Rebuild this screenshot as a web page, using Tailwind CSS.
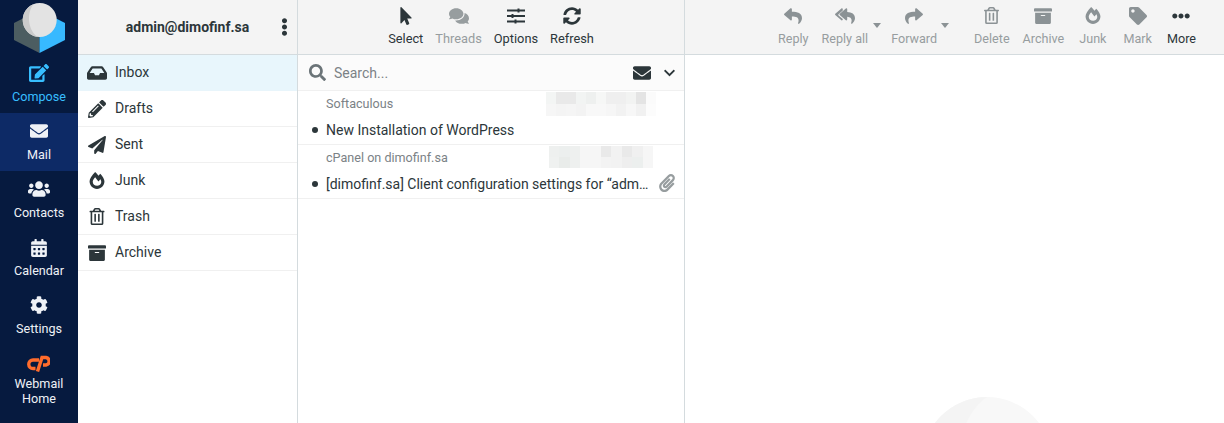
<!DOCTYPE html>
<html lang="en">
  <head>
    <meta charset="UTF-8" />
    <title>Roundcube Webmail</title>
    <script src="https://cdn.jsdelivr.net/npm/@tailwindcss/browser@4"></script>
  </head>
  <body class="h-[423px] w-[1224px] overflow-hidden bg-white font-['Roboto',sans-serif] text-[14px] text-[#2c363a]">
    <!-- icon sprite -->
    <svg class="hidden">
      <symbol id="i-edit" viewBox="0 0 576 512"><path d="M402.6 83.2l90.2 90.2c3.8 3.8 3.8 10 0 13.8L274.4 405.6l-92.8 10.3c-12.4 1.4-22.9-9.1-21.5-21.5l10.3-92.8L388.8 83.2c3.8-3.8 10-3.8 13.8 0zm162-22.9l-48.8-48.8c-15.2-15.2-39.9-15.2-55.2 0l-35.4 35.4c-3.8 3.8-3.8 10 0 13.8l90.2 90.2c3.8 3.8 10 3.8 13.8 0l35.4-35.4c15.2-15.3 15.2-40 0-55.2zM384 346.2V448H64V128h229.8c3.2 0 6.2-1.3 8.5-3.5l40-40c7.6-7.6 2.2-20.5-8.5-20.5H48C21.5 64 0 85.5 0 112v352c0 26.5 21.5 48 48 48h352c26.5 0 48-21.5 48-48V306.2c0-10.7-12.9-16-20.5-8.5l-40 40c-2.2 2.3-3.5 5.3-3.5 8.5z"/></symbol>
      <symbol id="i-envelope" viewBox="0 0 512 512"><path d="M502.3 190.8c3.9-3.1 9.7-.2 9.7 4.7V400c0 26.5-21.5 48-48 48H48c-26.5 0-48-21.5-48-48V195.6c0-5 5.7-7.8 9.7-4.7 22.4 17.4 52.1 39.5 154.1 113.6 21.1 15.4 56.7 47.8 92.2 47.6 35.7.3 72-32.8 92.3-47.6 102-74.1 131.6-96.3 154-113.7zM256 320c23.2.4 56.6-29.2 73.4-41.4 132.7-96.3 142.8-104.7 173.4-128.7 5.8-4.5 9.2-11.5 9.2-18.9v-19c0-26.5-21.5-48-48-48H48C21.5 64 0 85.5 0 112v19c0 7.4 3.4 14.3 9.2 18.9 30.6 23.9 40.7 32.4 173.4 128.7 16.8 12.2 50.2 41.8 73.4 41.4z"/></symbol>
      <symbol id="i-users" viewBox="0 0 640 512"><path d="M96 224c35.3 0 64-28.7 64-64s-28.7-64-64-64-64 28.7-64 64 28.7 64 64 64zm448 0c35.3 0 64-28.7 64-64s-28.7-64-64-64-64 28.7-64 64 28.7 64 64 64zm32 32h-64c-17.6 0-33.5 7.1-45.1 18.6 40.3 22.1 68.9 62 75.1 109.4h66c17.7 0 32-14.3 32-32v-32c0-35.3-28.7-64-64-64zm-256 0c61.9 0 112-50.1 112-112S381.9 32 320 32 208 82.1 208 144s50.1 112 112 112zm76.8 32h-8.3c-20.8 10-43.9 16-68.5 16s-47.6-6-68.5-16h-8.3C179.6 288 128 339.6 128 403.2V432c0 26.5 21.5 48 48 48h288c26.5 0 48-21.5 48-48v-28.8c0-63.6-51.6-115.2-115.2-115.2zm-223.7-13.4C161.5 263.1 145.6 256 128 256H64c-35.3 0-64 28.7-64 64v32c0 17.7 14.3 32 32 32h65.9c6.3-47.4 34.9-87.3 75.2-109.4z"/></symbol>
      <symbol id="i-calendar" viewBox="0 0 448 512"><path d="M0 464c0 26.5 21.5 48 48 48h352c26.5 0 48-21.5 48-48V192H0v272zm320-196c0-6.6 5.4-12 12-12h40c6.6 0 12 5.4 12 12v40c0 6.6-5.4 12-12 12h-40c-6.6 0-12-5.4-12-12v-40zm0 128c0-6.6 5.4-12 12-12h40c6.6 0 12 5.4 12 12v40c0 6.6-5.4 12-12 12h-40c-6.6 0-12-5.4-12-12v-40zM192 268c0-6.6 5.4-12 12-12h40c6.6 0 12 5.4 12 12v40c0 6.6-5.4 12-12 12h-40c-6.6 0-12-5.4-12-12v-40zm0 128c0-6.6 5.4-12 12-12h40c6.6 0 12 5.4 12 12v40c0 6.6-5.4 12-12 12h-40c-6.6 0-12-5.4-12-12v-40zM64 268c0-6.6 5.4-12 12-12h40c6.6 0 12 5.4 12 12v40c0 6.6-5.4 12-12 12H76c-6.6 0-12-5.4-12-12v-40zm0 128c0-6.6 5.4-12 12-12h40c6.6 0 12 5.4 12 12v40c0 6.6-5.4 12-12 12H76c-6.6 0-12-5.4-12-12v-40zM400 64h-48V16c0-8.8-7.2-16-16-16h-32c-8.8 0-16 7.2-16 16v48H160V16c0-8.8-7.2-16-16-16h-32c-8.8 0-16 7.2-16 16v48H48C21.5 64 0 85.5 0 112v48h448v-48c0-26.5-21.5-48-48-48z"/></symbol>
      <symbol id="i-cog" viewBox="0 0 512 512"><path d="M487.4 315.7l-42.6-24.6c4.3-23.2 4.3-47 0-70.2l42.6-24.6c4.9-2.8 7.1-8.6 5.5-14-11.1-35.6-30-67.8-54.7-94.6-3.8-4.1-10-5.1-14.8-2.3L380.8 110c-17.9-15.4-38.5-27.3-60.8-35.1V25.8c0-5.6-3.9-10.5-9.4-11.7-36.7-8.2-74.3-7.8-109.2 0-5.5 1.2-9.4 6.1-9.4 11.7V75c-22.2 7.9-42.8 19.8-60.8 35.1L88.7 85.5c-4.9-2.8-11-1.9-14.8 2.3-24.7 26.7-43.6 58.9-54.7 94.6-1.7 5.4.6 11.2 5.5 14L67.3 221c-4.3 23.2-4.3 47 0 70.2l-42.6 24.6c-4.9 2.8-7.1 8.6-5.5 14 11.1 35.6 30 67.8 54.7 94.6 3.8 4.1 10 5.1 14.8 2.3l42.6-24.6c17.9 15.4 38.5 27.3 60.8 35.1v49.2c0 5.6 3.9 10.5 9.4 11.7 36.7 8.2 74.3 7.8 109.2 0 5.5-1.2 9.4-6.1 9.4-11.7v-49.2c22.2-7.9 42.8-19.8 60.8-35.1l42.6 24.6c4.9 2.8 11 1.9 14.8-2.3 24.7-26.7 43.6-58.9 54.7-94.6 1.5-5.5-.7-11.3-5.6-14.1zM256 336c-44.1 0-80-35.9-80-80s35.9-80 80-80 80 35.9 80 80-35.9 80-80 80z"/></symbol>
      <symbol id="i-inbox" viewBox="0 0 576 512"><path d="M567.938 243.908L462.25 85.374A48.003 48.003 0 0 0 422.311 64H153.689a48 48 0 0 0-39.938 21.374L8.062 243.908A47.994 47.994 0 0 0 0 270.533V400c0 26.51 21.49 48 48 48h480c26.51 0 48-21.49 48-48V270.533a47.994 47.994 0 0 0-8.062-26.625zM162.252 128h251.497l85.333 128H376l-32 64H232l-32-64H76.918l85.334-128z"/></symbol>
      <symbol id="i-pencil" viewBox="0 0 512 512"><path d="M497.9 142.1l-46.1 46.1c-4.7 4.7-12.3 4.7-17 0l-111-111c-4.7-4.7-4.7-12.3 0-17l46.1-46.1c18.7-18.7 49.1-18.7 67.9 0l60.1 60.1c18.8 18.7 18.8 49.1 0 67.9zM284.2 99.8L21.6 362.4.4 483.9c-2.9 16.4 11.4 30.6 27.8 27.8l121.5-21.3 262.6-262.6c4.7-4.7 4.7-12.3 0-17l-111-111c-4.8-4.7-12.4-4.7-17.1 0zM124.1 339.9c-5.5-5.5-5.5-14.3 0-19.8l154-154c5.5-5.5 14.3-5.5 19.8 0s5.5 14.3 0 19.8l-154 154c-5.5 5.5-14.3 5.5-19.8 0zM88 424h48v36.3l-64.5 11.3-31.1-31.1L51.7 376H88v48z"/></symbol>
      <symbol id="i-plane" viewBox="0 0 512 512"><path d="M476 3.2L12.5 270.6c-18.1 10.4-15.8 35.6 2.2 43.2L121 358.4l287.3-253.2c5.5-4.9 13.3 2.6 8.6 8.3L176 407v80.5c0 23.6 28.5 32.9 42.5 15.8L282 426l124.6 52.2c14.2 6 30.4-2.9 33-18.2l72-432C515 7.8 493.3-6.8 476 3.2z"/></symbol>
      <symbol id="i-fire" viewBox="0 0 448 512"><path d="M323.56 51.2c-20.8 19.3-39.58 39.59-56.22 59.97C240.08 73.62 206.28 35.53 168 0 69.74 91.17 0 209.96 0 281.6 0 408.85 100.29 512 224 512s224-103.15 224-230.4c0-53.27-51.98-163.14-124.44-230.4zm-19.47 340.65C282.43 407.01 255.72 416 226.86 416 154.71 416 96 368.26 96 290.75c0-38.61 24.31-72.63 72.79-130.75 6.93 7.98 98.83 125.34 98.83 125.34l58.63-66.88c4.14 6.85 7.91 13.55 11.27 19.97 27.35 52.19 15.81 118.97-33.43 153.42z"/></symbol>
      <symbol id="i-trash" viewBox="0 0 448 512"><path d="M268 416h24a12 12 0 0 0 12-12V188a12 12 0 0 0-12-12h-24a12 12 0 0 0-12 12v216a12 12 0 0 0 12 12zM432 80h-82.41l-34-56.7A48 48 0 0 0 274.41 0H173.59a48 48 0 0 0-41.16 23.3L98.41 80H16A16 16 0 0 0 0 96v16a16 16 0 0 0 16 16h16v336a48 48 0 0 0 48 48h288a48 48 0 0 0 48-48V128h16a16 16 0 0 0 16-16V96a16 16 0 0 0-16-16zM171.84 50.91A6 6 0 0 1 177 48h94a6 6 0 0 1 5.15 2.91L293.61 80H154.39zM368 464H80V128h288zm-212-48h24a12 12 0 0 0 12-12V188a12 12 0 0 0-12-12h-24a12 12 0 0 0-12 12v216a12 12 0 0 0 12 12z"/></symbol>
      <symbol id="i-archive" viewBox="0 0 512 512"><path d="M32 448c0 17.7 14.3 32 32 32h384c17.7 0 32-14.3 32-32V160H32v288zm160-212c0-6.6 5.4-12 12-12h104c6.6 0 12 5.4 12 12v8c0 6.6-5.4 12-12 12H204c-6.6 0-12-5.4-12-12v-8zM480 32H32C14.3 32 0 46.3 0 64v48c0 8.8 7.2 16 16 16h480c8.8 0 16-7.2 16-16V64c0-17.7-14.3-32-32-32z"/></symbol>
      <symbol id="i-pointer" viewBox="0 0 320 512"><path d="M302.189 329.126H196.105l55.831 135.993c3.889 9.428-.555 19.999-9.444 23.999l-49.165 21.427c-9.165 4-19.443-.571-23.332-9.714l-53.053-129.136-86.664 89.138C18.729 472.71 0 463.554 0 447.977V18.299C0 1.899 19.921-6.096 30.277 5.443l284.412 292.542c11.472 11.179 3.007 31.141-12.5 31.141z"/></symbol>
      <symbol id="i-comments" viewBox="0 0 576 512"><path d="M416 192c0-88.4-93.1-160-208-160S0 103.6 0 192c0 34.3 14.1 65.9 38 92-13.4 30.2-35.5 54.2-35.8 54.5-2.2 2.3-2.8 5.7-1.5 8.7S4.8 352 8 352c36.6 0 66.9-12.3 88.7-25 32.2 15.7 70.3 25 111.3 25 114.9 0 208-71.6 208-160zm122 220c23.9-26 38-57.7 38-92 0-66.9-53.5-124.2-129.3-148.1.9 6.6 1.3 13.3 1.3 20.1 0 105.9-107.7 192-240 192-10.8 0-21.3-.8-31.7-1.9C207.8 439.6 281.8 480 368 480c41 0 79.1-9.2 111.3-25 21.8 12.7 52.1 25 88.7 25 3.2 0 6.1-1.9 7.3-4.8 1.3-2.9.7-6.3-1.5-8.7-.3-.3-22.4-24.2-35.8-54.5z"/></symbol>
      <symbol id="i-sliders" viewBox="0 0 18 16"><path d="M0 1.6h18v1.8H0zM0 7.1h18v1.8H0zM0 12.6h18v1.8H0zM10.5.4h2v4.2h-2zM4.5 5.9h2v4.2h-2zM7.5 11.4h2v4.2h-2z"/></symbol>
      <symbol id="i-sync" viewBox="0 0 512 512"><path d="M370.72 133.28C339.458 104.008 298.888 87.962 255.848 88c-77.458.068-144.328 53.178-162.791 126.85-1.344 5.363-6.122 9.15-11.651 9.15H24.103c-7.498 0-13.194-6.807-11.807-14.176C33.933 94.924 134.813 8 256 8c66.448 0 126.791 26.136 171.315 68.685L463.03 40.97C478.149 25.851 504 36.559 504 57.941V192c0 13.255-10.745 24-24 24H345.941c-21.382 0-32.09-25.851-16.971-40.971l41.75-41.749zM32 296h134.059c21.382 0 32.09 25.851 16.971 40.971l-41.75 41.75c31.262 29.273 71.835 45.319 114.876 45.28 77.418-.07 144.315-53.144 162.787-126.849 1.344-5.363 6.122-9.15 11.651-9.15h57.304c7.498 0 13.193 6.807 11.807 14.176C478.067 417.076 377.187 504 256 504c-66.448 0-126.791-26.136-171.315-68.685L48.97 471.03C33.851 486.149 8 475.441 8 454.059V320c0-13.255 10.745-24 24-24z"/></symbol>
      <symbol id="i-dots-v" viewBox="0 0 192 512"><path d="M96 184c39.8 0 72 32.2 72 72s-32.2 72-72 72-72-32.2-72-72 32.2-72 72-72zM24 80c0 39.8 32.2 72 72 72s72-32.2 72-72S135.8 8 96 8 24 40.2 24 80zm0 352c0 39.8 32.2 72 72 72s72-32.2 72-72-32.2-72-72-72-72 32.2-72 72z"/></symbol>
      <symbol id="i-dots-h" viewBox="0 0 512 512"><path d="M328 256c0 39.8-32.2 72-72 72s-72-32.2-72-72 32.2-72 72-72 72 32.2 72 72zm104-72c-39.8 0-72 32.2-72 72s32.2 72 72 72 72-32.2 72-72-32.2-72-72-72zm-352 0c-39.8 0-72 32.2-72 72s32.2 72 72 72 72-32.2 72-72-32.2-72-72-72z"/></symbol>
      <symbol id="i-search" viewBox="0 0 512 512"><path d="M505 442.7L405.3 343c-4.5-4.5-10.6-7-17-7H372c27.6-35.3 44-79.7 44-128C416 93.1 322.9 0 208 0S0 93.1 0 208s93.1 208 208 208c48.3 0 92.7-16.4 128-44v16.3c0 6.4 2.5 12.5 7 17l99.7 99.7c9.4 9.4 24.6 9.4 33.9 0l28.3-28.3c9.4-9.4 9.4-24.6.1-34zM208 336c-70.7 0-128-57.2-128-128 0-70.7 57.2-128 128-128 70.7 0 128 57.2 128 128 0 70.7-57.2 128-128 128z"/></symbol>
      <symbol id="i-chevron" viewBox="0 0 448 512"><path d="M207.029 381.476L12.686 187.132c-9.373-9.373-9.373-24.569 0-33.941l22.667-22.667c9.357-9.357 24.522-9.375 33.901-.04L224 284.505l154.745-154.021c9.379-9.335 24.544-9.317 33.901.04l22.667 22.667c9.373 9.373 9.373 24.569 0 33.941L240.971 381.476c-9.373 9.372-24.569 9.372-33.942 0z"/></symbol>
      <symbol id="i-clip" viewBox="0 0 448 512"><path d="M43.246 466.142c-58.43-60.289-57.341-157.511 1.386-217.581L254.392 34c44.316-45.332 116.351-45.336 160.671 0 43.89 44.894 43.943 117.329 0 162.276L232.214 383.128c-29.855 30.537-78.633 30.111-107.982-.998-28.275-29.97-27.368-77.473 1.452-106.953l143.743-146.835c6.182-6.314 16.312-6.422 22.626-.241l22.861 22.379c6.315 6.182 6.422 16.312.241 22.626L171.427 319.927c-4.932 5.045-5.236 13.428-.648 18.292 4.372 4.634 11.245 4.711 15.688.165l182.849-186.851c19.613-20.062 19.613-52.725-.011-72.798-19.189-19.627-49.957-19.637-69.154 0L90.39 293.295c-34.763 35.56-35.299 93.12-1.191 128.313 34.01 35.093 88.985 35.137 123.058.286l172.06-175.999c6.177-6.319 16.307-6.433 22.626-.256l22.877 22.364c6.319 6.177 6.434 16.307.256 22.626l-172.06 175.998c-59.576 60.938-155.943 60.216-214.77-.485z"/></symbol>
      <symbol id="i-reply" viewBox="0 0 512 512"><path d="M8.309 189.836L184.313 37.851C199.719 24.546 224 35.347 224 56.015v80.053c160.629 1.839 288 34.032 288 186.258 0 61.441-39.581 122.309-83.333 154.132-13.653 9.931-33.111-2.533-28.077-18.631 45.344-145.012-21.507-183.51-176.59-185.742V360c0 20.7-24.3 31.453-39.687 18.164l-176.004-152c-11.071-9.562-11.086-26.753 0-36.328z"/></symbol>
      <symbol id="i-reply-all" viewBox="0 0 576 512"><path d="M136.309 189.836L312.313 37.851C327.72 24.546 352 35.348 352 56.015v82.763c129.182 10.231 224 52.212 224 183.548 0 61.441-39.582 122.309-83.333 154.132-13.653 9.931-33.111-2.533-28.077-18.631 38.512-123.162-3.922-169.482-112.59-182.015V360c0 20.701-24.3 31.453-39.687 18.164l-176.004-152c-11.071-9.561-11.086-26.753 0-36.328zM8.309 226.164l176.004 152c15.387 13.289 39.687 2.536 39.687-18.164v-15.722L102.4 239.2c-11.071-9.561-11.086-26.753 0-36.328L224 97.9V56.015c0-20.667-24.28-31.469-39.687-18.164L8.309 189.836c-11.086 9.575-11.071 26.767 0 36.328z"/></symbol>
      <symbol id="i-share" viewBox="0 0 512 512"><path d="M503.691 189.836L327.687 37.851C312.281 24.546 288 35.347 288 56.015v80.053C127.371 137.907 0 170.1 0 322.326c0 61.441 39.581 122.309 83.333 154.132 13.653 9.931 33.111-2.533 28.077-18.631C66.066 312.814 132.917 274.316 288 272.085V360c0 20.7 24.3 31.453 39.687 18.164l176.004-152c11.071-9.562 11.086-26.753 0-36.328z"/></symbol>
      <symbol id="i-tag" viewBox="0 0 512 512"><path d="M0 252.118V48C0 21.49 21.49 0 48 0h204.118a48 48 0 0 1 33.941 14.059l211.882 211.882c18.745 18.745 18.745 49.137 0 67.882L293.823 497.941c-18.745 18.745-49.137 18.745-67.882 0L14.059 286.059A48 48 0 0 1 0 252.118zM112 64c-26.51 0-48 21.49-48 48s21.49 48 48 48 48-21.49 48-48-21.49-48-48-48z"/></symbol>
    </svg>

    <div class="flex h-full">
      <!-- Left nav -->
      <nav class="flex w-[78px] shrink-0 flex-col bg-[#061a3f] text-[12.6px] leading-[17px] text-[#eef1f6]">
        <div class="h-[55px] shrink-0">
          <svg viewBox="0 0 78 55" class="h-[55px] w-[78px]">
            <path d="M14 23 L39.5 10 L39.5 53 L14 40 Z" fill="#4c5d61" />
            <path d="M65 23 L39.5 10 L39.5 53 L65 40 Z" fill="#37b9ff" />
            <circle cx="39.7" cy="20" r="17" fill="#e3e3e3" />
            <path d="M33.5 4.2 A17 17 0 0 0 37 36.8 C27 28 27 12 33.5 4.2 Z" fill="#cbcbcb" />
          </svg>
        </div>
        <a class="flex h-[58px] flex-col items-center pt-[9px] text-[#37beff]">
          <svg class="h-[18px] w-[20px] fill-current"><use href="#i-edit" /></svg>
          <span class="mt-[6px]">Compose</span>
        </a>
        <a class="flex h-[58px] flex-col items-center bg-[#0d2a66] pt-[9px]">
          <svg class="h-[18px] w-[18px] fill-current"><use href="#i-envelope" /></svg>
          <span class="mt-[6px]">Mail</span>
        </a>
        <a class="flex h-[58px] flex-col items-center pt-[9px]">
          <svg class="h-[18px] w-[22px] fill-current"><use href="#i-users" /></svg>
          <span class="mt-[6px]">Contacts</span>
        </a>
        <a class="flex h-[58px] flex-col items-center pt-[10px]">
          <svg class="h-[18px] w-[16px] fill-current"><use href="#i-calendar" /></svg>
          <span class="mt-[5px]">Calendar</span>
        </a>
        <a class="flex h-[58px] flex-col items-center pt-[9px]">
          <svg class="h-[18px] w-[18px] fill-current"><use href="#i-cog" /></svg>
          <span class="mt-[6px]">Settings</span>
        </a>
        <a class="flex flex-col items-center pt-[10px] text-center leading-[15px]">
          <svg viewBox="27 355 23 17" class="mr-[2px] h-[17px] w-[23px]" fill="none" stroke="#ff6c2c" stroke-width="3.4">
            <path d="M39 360 H33 A4 4 0 0 0 33 368.5 H35.5" />
            <path d="M37.5 371.5 L42 357.5 H46 A3.8 3.8 0 0 1 46 365 H43" />
          </svg>
          <span class="mt-[4px]">Webmail<br />Home</span>
        </a>
      </nav>

      <!-- Folder column -->
      <aside class="flex w-[220px] shrink-0 flex-col border-r border-[#d4dbde]">
        <header class="flex h-[55px] shrink-0 items-center border-b border-[#d4dbde] bg-[#f4f4f4]">
          <span class="flex-1 pl-[35px] text-center font-bold">admin@dimofinf.sa</span>
          <svg class="mr-[9px] ml-[19px] h-[18px] w-[7px] fill-current"><use href="#i-dots-v" /></svg>
        </header>
        <ul class="leading-[35px]">
          <li class="flex h-[36px] items-center gap-[8px] border-b border-[#e8f5fb] bg-[#e8f6fc] pl-[9px]">
            <svg class="h-[18px] w-[20px] fill-current"><use href="#i-inbox" /></svg>Inbox
          </li>
          <li class="flex h-[36px] items-center gap-[8px] border-b border-[#f0f0f0] pl-[9px]">
            <svg class="h-[18px] w-[20px] fill-current"><use href="#i-pencil" /></svg>Drafts
          </li>
          <li class="flex h-[36px] items-center gap-[8px] border-b border-[#f0f0f0] pl-[9px]">
            <svg class="h-[18px] w-[20px] fill-current"><use href="#i-plane" /></svg>Sent
          </li>
          <li class="flex h-[36px] items-center gap-[8px] border-b border-[#f0f0f0] pl-[9px]">
            <svg class="h-[17px] w-[20px] fill-current"><use href="#i-fire" /></svg>Junk
          </li>
          <li class="flex h-[36px] items-center gap-[8px] border-b border-[#f0f0f0] pl-[9px]">
            <svg class="h-[17px] w-[20px] fill-current"><use href="#i-trash" /></svg>Trash
          </li>
          <li class="flex h-[36px] items-center gap-[8px] border-b border-[#f0f0f0] pl-[9px]">
            <svg class="h-[18px] w-[20px] fill-current"><use href="#i-archive" /></svg>Archive
          </li>
        </ul>
      </aside>

      <!-- Message list column -->
      <section class="flex w-[387px] shrink-0 flex-col border-r border-[#d4dbde]">
        <header class="flex h-[55px] shrink-0 justify-center gap-[12px] border-b border-[#d4dbde] bg-[#f4f4f4] pt-[7px] text-[12.8px] leading-[17px]">
          <a class="flex flex-col items-center">
            <svg class="h-[18px] w-[12px] fill-current"><use href="#i-pointer" /></svg>
            <span class="mt-[5px]">Select</span>
          </a>
          <a class="flex flex-col items-center text-[#979d9f]">
            <svg class="h-[18px] w-[20px] fill-current"><use href="#i-comments" /></svg>
            <span class="mt-[5px]">Threads</span>
          </a>
          <a class="flex flex-col items-center">
            <svg class="h-[18px] w-[18px] fill-current"><use href="#i-sliders" /></svg>
            <span class="mt-[5px]">Options</span>
          </a>
          <a class="flex flex-col items-center">
            <svg class="h-[18px] w-[18px] fill-current"><use href="#i-sync" /></svg>
            <span class="mt-[5px]">Refresh</span>
          </a>
        </header>
        <div class="flex h-[36px] shrink-0 items-center border-b border-[#f0f0f0] bg-[#fbfbfb] pr-[9px] pl-[11px]">
          <svg class="h-[17px] w-[17px] fill-[#6b7478]"><use href="#i-search" /></svg>
          <span class="ml-[8px] flex-1 pt-[1px] text-[#7b8286]">Search...</span>
          <svg class="h-[18px] w-[18px] fill-current"><use href="#i-envelope" /></svg>
          <svg class="ml-[13px] h-[14px] w-[11px] fill-current"><use href="#i-chevron" /></svg>
        </div>
        <ul>
          <li class="relative h-[54px] border-b border-[#f0f0f0] pl-[28px]">
            <div class="pt-[4px] text-[12.6px] leading-[17px] text-[#7b8286]">Softaculous</div>
            <div class="mt-[8px] leading-[20px]">New Installation of WordPress</div>
            <span class="absolute top-[36px] left-[14px] h-[6px] w-[6px] rounded-full bg-[#2c363a]"></span>
            <!-- pixelated date -->
            <div class="absolute top-[1px] right-[28px] grid h-[24px] w-[110px] grid-cols-11 grid-rows-2">
              <i class="bg-[#f3f5f4]"></i><i class="bg-[#e9e9e9]"></i><i class="bg-[#e9e9e9]"></i><i class="bg-[#f2f4f3]"></i><i class="bg-[#eef0ef]"></i><i class="bg-[#f6f7f6]"></i><i class="bg-[#efefef]"></i><i class="bg-[#efefef]"></i><i class="bg-[#f2f3f2]"></i><i class="bg-[#e4e4e4]"></i><i class="bg-[#fbfbfb]"></i>
              <i class="bg-[#f6f6f6]"></i><i class="bg-[#f4f4f4]"></i><i class="bg-[#f5f5f5]"></i><i class="bg-[#f3f3f3]"></i><i class="bg-[#f8f8f8]"></i><i class="bg-[#f8f8f8]"></i><i class="bg-[#f6f6f6]"></i><i class="bg-[#f2f2f2]"></i><i class="bg-[#f7f7f7]"></i><i class="bg-[#f1f1f1]"></i><i class="bg-[#fcfcfc]"></i>
            </div>
          </li>
          <li class="relative h-[54px] border-b border-[#f0f0f0] pl-[28px]">
            <div class="pt-[4px] text-[12.6px] leading-[17px] text-[#7b8286]">cPanel on dimofinf.sa</div>
            <div class="mt-[8px] leading-[20px]">[dimofinf.sa] Client configuration settings for “adm…</div>
            <span class="absolute top-[36px] left-[14px] h-[6px] w-[6px] rounded-full bg-[#2c363a]"></span>
            <svg class="absolute top-[29px] right-[9px] h-[18px] w-[16px] fill-[#979d9f]"><use href="#i-clip" /></svg>
            <div class="absolute top-[1px] right-[31px] grid h-[22px] w-[104px] grid-cols-10 grid-rows-2">
              <i class="bg-[#eef0ef]"></i><i class="bg-[#ecefee]"></i><i class="bg-[#eef0ef]"></i><i class="bg-[#f6f6f6]"></i><i class="bg-[#f6f6f6]"></i><i class="bg-[#e9e9e9]"></i><i class="bg-[#f2f2f2]"></i><i class="bg-[#e9e9e9]"></i><i class="bg-[#f0f0f0]"></i><i class="bg-[#f6f6f6]"></i>
              <i class="bg-[#eff1f0]"></i><i class="bg-[#e9ecea]"></i><i class="bg-[#eef0ef]"></i><i class="bg-[#f6f6f6]"></i><i class="bg-[#f6f6f6]"></i><i class="bg-[#f3f3f3]"></i><i class="bg-[#f2f2f2]"></i><i class="bg-[#eeeeee]"></i><i class="bg-[#ecefee]"></i><i class="bg-[#f6f6f6]"></i>
            </div>
          </li>
        </ul>
      </section>

      <!-- Preview column -->
      <main class="relative flex min-w-0 flex-1 flex-col overflow-hidden">
        <header class="flex h-[55px] shrink-0 justify-end border-b border-[#d4dbde] bg-[#f4f4f4] pt-[7px] pr-[28px] text-[12.6px] leading-[17px] text-[#979d9f]">
          <a class="flex flex-col items-center">
            <svg class="h-[18px] w-[18px] fill-[#8b9295]"><use href="#i-reply" /></svg>
            <span class="mt-[5px]">Reply</span>
          </a>
          <a class="ml-[13px] flex flex-col items-center">
            <svg class="h-[18px] w-[20px] fill-[#8b9295]"><use href="#i-reply-all" /></svg>
            <span class="mt-[5px]">Reply all</span>
          </a>
          <span class="mt-[16px] ml-[5px] h-0 w-0 border-x-[4px] border-t-[5px] border-x-transparent border-t-[#8b9295]"></span>
          <a class="ml-[10px] flex flex-col items-center">
            <svg class="h-[18px] w-[18px] fill-[#8b9295]"><use href="#i-share" /></svg>
            <span class="mt-[5px]">Forward</span>
          </a>
          <span class="mt-[16px] ml-[4px] h-0 w-0 border-x-[4px] border-t-[5px] border-x-transparent border-t-[#8b9295]"></span>
          <a class="ml-[25px] flex flex-col items-center">
            <svg class="h-[17px] w-[15px] fill-[#8b9295]"><use href="#i-trash" /></svg>
            <span class="mt-[6px]">Delete</span>
          </a>
          <a class="ml-[13px] flex flex-col items-center">
            <svg class="h-[18px] w-[18px] fill-[#8b9295]"><use href="#i-archive" /></svg>
            <span class="mt-[5px]">Archive</span>
          </a>
          <a class="ml-[15px] flex flex-col items-center">
            <svg class="h-[17px] w-[16px] fill-[#8b9295]"><use href="#i-fire" /></svg>
            <span class="mt-[6px]">Junk</span>
          </a>
          <a class="ml-[17px] flex flex-col items-center">
            <svg class="h-[18px] w-[18px] fill-[#8b9295]"><use href="#i-tag" /></svg>
            <span class="mt-[5px]">Mark</span>
          </a>
          <a class="ml-[15px] flex flex-col items-center text-[#2c363a]">
            <svg class="h-[18px] w-[18px] fill-current"><use href="#i-dots-h" /></svg>
            <span class="mt-[5px]">More</span>
          </a>
        </header>
        <!-- watermark logo -->
        <svg class="absolute top-[397px] left-[237px] h-[130px] w-[130px]" viewBox="0 0 130 130">
          <circle cx="65" cy="65" r="65" fill="#f8f8f8" />
          <path d="M65 0 A65 65 0 0 0 0 65 C0 95 15 120 45 130 C25 80 35 20 65 0 Z" fill="#f4f4f4" />
        </svg>
      </main>
    </div>
  </body>
</html>
